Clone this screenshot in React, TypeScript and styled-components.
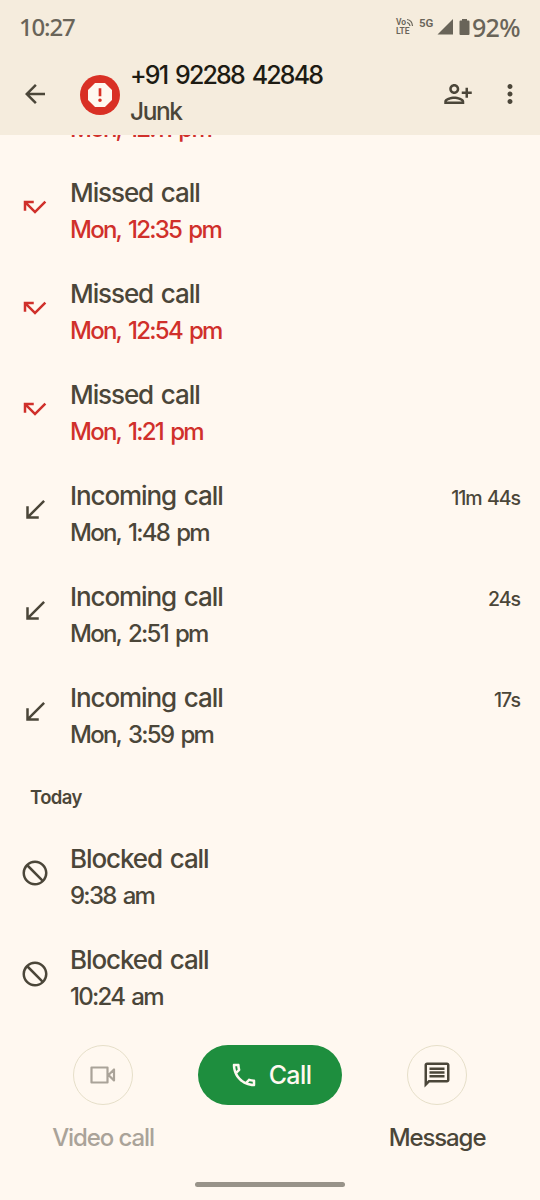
import React from "react";
import styled, { createGlobalStyle } from "styled-components";
import {
  MdArrowBack,
  MdBlock,
  MdCallMissed,
  MdCallReceived,
  MdMoreVert,
  MdOutlineCall,
  MdOutlineMessage,
  MdOutlinePersonAddAlt1,
  MdReport,
} from "react-icons/md";

const ink = "#4b4639";
const red = "#d0302b";
const cream = "#fff8f0";
const sand = "#f5ecdd";

const GlobalStyle = createGlobalStyle`
  * { box-sizing: border-box; }
  body { margin: 0; background: ${cream}; }
`;

const Screen = styled.main`
  display: flex;
  flex-direction: column;
  width: 540px;
  height: 1200px;
  overflow: hidden;
  background: ${cream};
  color: ${ink};
  font-family: Inter, Roboto, sans-serif;
  font-weight: 450;
  white-space: nowrap;
`;

const Header = styled.header`
  flex: none;
  height: 135px;
  background: ${sand};
`;

const StatusBar = styled.div`
  display: flex;
  align-items: center;
  height: 54px;
  padding: 0 20px 0 19px;
  color: #696459;
  font: 500 24px/30px "Noto Sans", sans-serif;
`;

const Clock = styled.span`
  margin-right: auto;
  letter-spacing: -1.2px;
`;

const Battery = styled.span`
  font-size: 25px;
  letter-spacing: -0.6px;
`;

const StatusIcons = styled.svg`
  display: block;
  font-family: Roboto, sans-serif;
`;

const AppBar = styled.div`
  display: flex;
  align-items: center;
  height: 80px;
  padding: 0 15px 0 20px;
`;

const Avatar = styled.div`
  display: grid;
  place-items: center;
  width: 40px;
  height: 40px;
  margin: 1px 10px 0 30px;
  border-radius: 50%;
  background: #d93025;
  color: ${cream};
`;

const Contact = styled.div`
  flex: 1;
  padding-bottom: 2px;
  font-size: 25px;
`;

const PhoneNumber = styled.div`
  color: #1d1b13;
  font-weight: 500;
  line-height: 37px;
  letter-spacing: -1.85px;
  word-spacing: 3px;
`;

const Tag = styled.div`
  font-size: 24.5px;
  line-height: 35px;
  letter-spacing: -1.45px;
`;

const BarIcon = styled.span`
  display: flex;
  margin-left: 22px;
`;

const History = styled.section`
  display: flex;
  flex: none;
  flex-direction: column;
  justify-content: flex-end;
  height: 908px;
  overflow: hidden;
`;

const Row = styled.div`
  display: flex;
  flex: none;
  align-items: flex-start;
  height: 101px;
  padding: 0 20px;
`;

const ScrolledRow = styled.div`
  flex: none;
  height: 65px;
  padding-left: 70px;
`;

const RowIcon = styled.span`
  display: flex;
  align-items: center;
  width: 50px;
  height: 64px;
`;

const RowText = styled.div`
  flex: 1;
`;

const Title = styled.div`
  font-size: 26px;
  line-height: 36px;
  letter-spacing: -1.1px;
  word-spacing: 2px;
`;

const Time = styled.div<{ $missed: boolean }>`
  color: ${(p) => (p.$missed ? red : ink)};
  font-size: 24px;
  line-height: 37px;
  letter-spacing: -1.75px;
  word-spacing: 2.5px;
`;

const Duration = styled.div`
  font-size: 19.5px;
  line-height: 40px;
  letter-spacing: -1px;
  word-spacing: 1px;
`;

const DayLabel = styled.h2`
  flex: none;
  height: 60px;
  margin: 0;
  padding-left: 30px;
  font-size: 18.5px;
  font-weight: 600;
  line-height: 33px;
  letter-spacing: -0.6px;
`;

const BlockedIcon = styled(MdBlock)`
  transform: scaleX(-1);
`;

const Footer = styled.footer`
  display: flex;
  flex-direction: column;
  flex: 1;
  align-items: center;
  padding-top: 2px;
`;

const Actions = styled.div`
  display: grid;
  grid-template-columns: 205px 129px 205px;
  justify-content: center;
  width: 100%;
`;

const Action = styled.div<{ $disabled?: boolean }>`
  display: flex;
  flex-direction: column;
  align-items: center;
  color: ${(p) => (p.$disabled ? "#aaa399" : ink)};
`;

const RoundButton = styled.button`
  display: grid;
  place-items: center;
  width: 60px;
  height: 60px;
  padding: 0;
  border: 1.5px solid #e6dfc9;
  border-radius: 50%;
  background: none;
  color: inherit;
`;

const ActionLabel = styled.span`
  margin-top: 14px;
  font-size: 24px;
  line-height: 37px;
  letter-spacing: -1.1px;
`;

const CallButton = styled.button`
  display: flex;
  align-items: center;
  justify-content: center;
  justify-self: center;
  gap: 10px;
  width: 144px;
  height: 60px;
  border: 0;
  border-radius: 30px;
  background: #1e8e3e;
  color: ${cream};
  font: 500 25px/37px Inter, sans-serif;
  letter-spacing: -0.6px;
`;

const GestureBar = styled.div`
  width: 150px;
  height: 5px;
  margin-top: 26px;
  border-radius: 3px;
  background: #989389;
`;

type Kind = "missed" | "incoming" | "blocked";
type Call = { kind: Kind; time: string; duration?: string };

const names: Record<Kind, string> = {
  missed: "Missed call",
  incoming: "Incoming call",
  blocked: "Blocked call",
};

const monday: Call[] = [
  { kind: "missed", time: "Mon, 12:35 pm" },
  { kind: "missed", time: "Mon, 12:54 pm" },
  { kind: "missed", time: "Mon, 1:21 pm" },
  { kind: "incoming", time: "Mon, 1:48 pm", duration: "11m 44s" },
  { kind: "incoming", time: "Mon, 2:51 pm", duration: "24s" },
  { kind: "incoming", time: "Mon, 3:59 pm", duration: "17s" },
];

const today: Call[] = [
  { kind: "blocked", time: "9:38 am" },
  { kind: "blocked", time: "10:24 am" },
];

function CallRow({ kind, time, duration }: Call) {
  return (
    <Row>
      <RowIcon>
        {kind === "missed" && <MdCallMissed size={30} color={red} />}
        {kind === "incoming" && <MdCallReceived size={30} />}
        {kind === "blocked" && <BlockedIcon size={30} />}
      </RowIcon>
      <RowText>
        <Title>{names[kind]}</Title>
        <Time $missed={kind === "missed"}>{time}</Time>
      </RowText>
      {duration && <Duration>{duration}</Duration>}
    </Row>
  );
}

export default function App() {
  return (
    <Screen>
      <GlobalStyle />
      <Header>
        <StatusBar>
          <Clock>10:27</Clock>
          <StatusIcons width="78" height="24" viewBox="394 15 78 24" fill="currentColor">
            <text x="396" y="25" fontSize="8.500" fontWeight="600">Vo</text>
            <text x="396" y="34" fontSize="8.500" fontWeight="600">LTE</text>
            <path d="M407 19.500q5 0.500 5.500 6.500M407 22.500q2.500 0.500 3 3.500" fill="none" stroke="currentColor" strokeWidth="1.200" />
            <text x="419" y="27" fontSize="11.500" fontWeight="600">5G</text>
            <path d="M453 19v15.500h-15.500z" />
            <path d="M462 19h5v1.500h1.500q1 0 1 1v12.500q0 1-1 1h-8q-1 0-1-1v-12.500q0-1 1-1h1.500z" />
          </StatusIcons>
          <Battery>92%</Battery>
        </StatusBar>
        <AppBar>
          <MdArrowBack size={30} />
          <Avatar>
            <MdReport size={32} />
          </Avatar>
          <Contact>
            <PhoneNumber>+91 92288 42848</PhoneNumber>
            <Tag>Junk</Tag>
          </Contact>
          <BarIcon>
            <MdOutlinePersonAddAlt1 size={30} />
          </BarIcon>
          <BarIcon>
            <MdMoreVert size={30} />
          </BarIcon>
        </AppBar>
      </Header>
      <History>
        <ScrolledRow>
          <Time $missed>Mon, 12:11 pm</Time>
        </ScrolledRow>
        {monday.map((call) => (
          <CallRow key={call.time} {...call} />
        ))}
        <DayLabel>Today</DayLabel>
        {today.map((call) => (
          <CallRow key={call.time} {...call} />
        ))}
      </History>
      <Footer>
        <Actions>
          <Action $disabled>
            <RoundButton aria-label="Video call">
              <svg width="26" height="18" viewBox="0 0 26 18" fill="none" stroke="currentColor" strokeWidth="2.200" strokeLinejoin="round">
                <path d="M1.500 1.500h16v15h-16zM18.500 9l5.500-5.500v11z" />
              </svg>
            </RoundButton>
            <ActionLabel>Video call</ActionLabel>
          </Action>
          <CallButton>
            <MdOutlineCall size={30} />
            Call
          </CallButton>
          <Action>
            <RoundButton aria-label="Message">
              <MdOutlineMessage size={30} />
            </RoundButton>
            <ActionLabel>Message</ActionLabel>
          </Action>
        </Actions>
        <GestureBar />
      </Footer>
    </Screen>
  );
}
